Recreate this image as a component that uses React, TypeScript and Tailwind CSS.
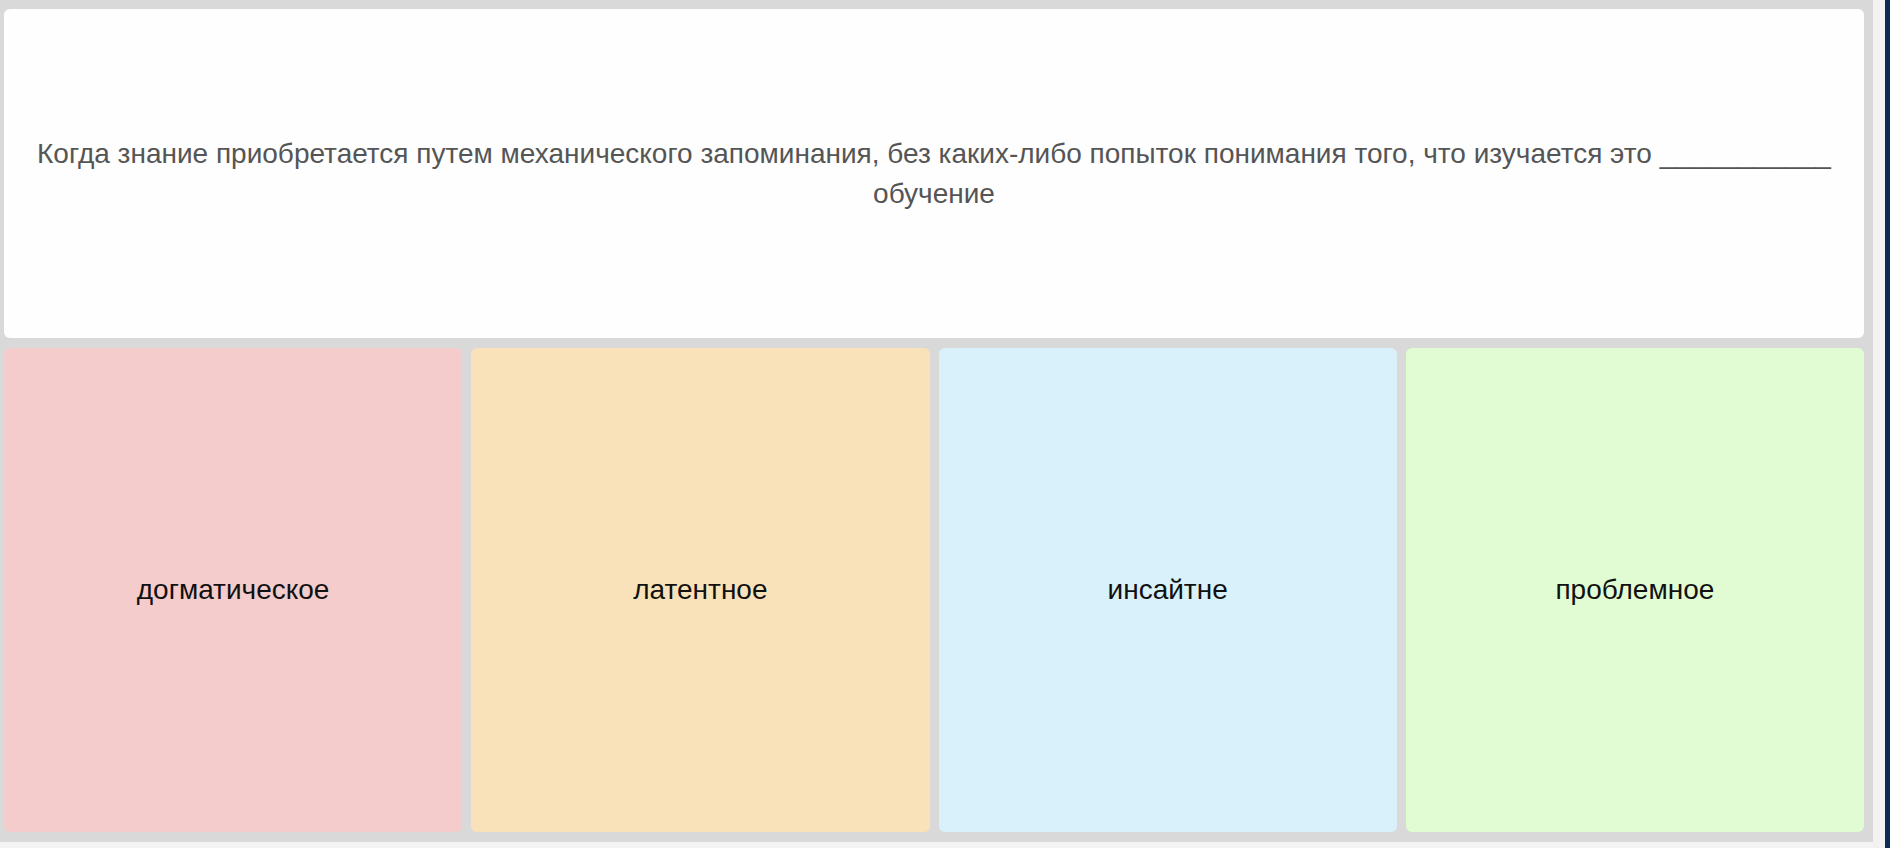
import React from 'react';

const answers = [
  { label: 'догматическое', bg: 'bg-[#f4cccc]' },
  { label: 'латентное', bg: 'bg-[#f9e2b9]' },
  { label: 'инсайтне', bg: 'bg-[#d9f1fb]' },
  { label: 'проблемное', bg: 'bg-[#e1fcd2]' },
];

const App: React.FC = () => {
  return (
    <div className="flex h-[848px] w-[1890px] overflow-hidden" style={{ fontFamily: '"Liberation Sans", Arial, sans-serif' }}>
      <div className="flex w-[1873px] flex-col">
        <main className="flex h-[842px] flex-col gap-[10px] bg-[#d9d9d9] pl-[4px] pr-[9px] pt-[9px] pb-[10px]">
          <section className="flex h-[329px] items-center justify-center rounded-md bg-[#fefefe] px-8">
            <p className="text-center text-[28px] leading-[40px] text-[#555555]">
              Когда знание приобретается путем механического запоминания, без каких-либо попыток понимания того, что изучается это ___________ обучение
            </p>
          </section>
          <section className="grid flex-1 grid-cols-4 gap-[9px]">
            {answers.map((a) => (
              <button
                key={a.label}
                className={`flex items-center justify-center rounded-md ${a.bg} text-[28px] text-[#111111]`}
              >
                {a.label}
              </button>
            ))}
          </section>
        </main>
        <div className="h-[6px] bg-[#f3f3f3]" />
      </div>
      <div className="flex w-[17px]">
        <div className="w-[12px] bg-[#f4f1f3]" />
        <div className="w-[5px] bg-[#0b2c52]" />
      </div>
    </div>
  );
};

export default App;
